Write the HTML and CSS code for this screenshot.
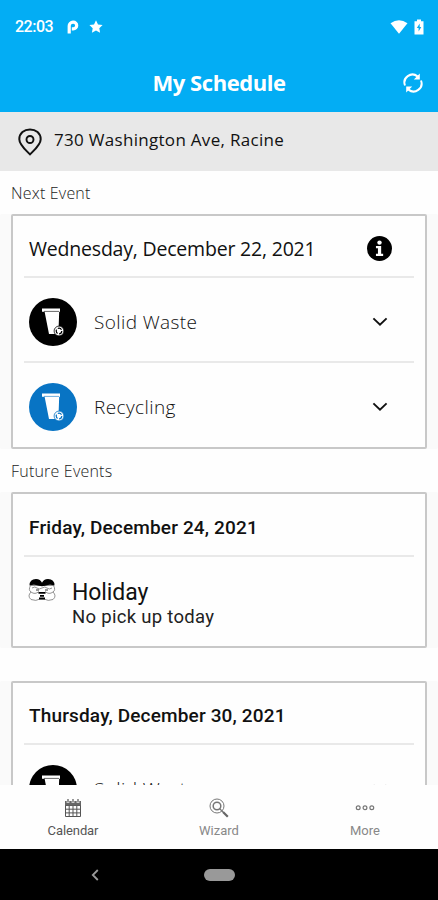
FILE: index.html
```
<!DOCTYPE html>
<html lang="en">
<head>
  <meta charset="UTF-8">
  <meta name="viewport" content="width=device-width, initial-scale=1.0">
  <title>My Schedule</title>
  <link rel="stylesheet" href="styles.css">
</head>
<body>
  <svg class="sprite">
    <symbol id="bin" viewBox="0 0 48 48">
      <path d="M13 10.500h18v3.200h-.8L29.400 36H20L15.600 13.700H13z" fill="#fff"/>
      <path d="M15 13.400h15" stroke="currentColor" stroke-width=".6"/>
      <circle cx="30" cy="33" r="4.900" fill="#fff" stroke="currentColor" stroke-width=".8"/>
      <circle cx="30" cy="33" r="2.800" fill="none" stroke="currentColor" stroke-width="1.200" stroke-dasharray="4.200 1.600"/>
    </symbol>
    <symbol id="chevron" viewBox="0 0 16 10">
      <path d="M1.400 1.400L8 7.800l6.600-6.400" fill="none" stroke="#111" stroke-width="1.900"/>
    </symbol>
  </svg>
  <div class="screen">
    <header class="header">
      <div class="status">
        <span class="time">22:03</span>
        <svg class="parking" viewBox="0 0 12 14">
          <path d="M2.200 13.500V6a3.800 3.800 0 0 1 3.800-3.900h.3a3.400 3.400 0 0 1 0 6.800H4.800" fill="none" stroke="#fff" stroke-width="3.200"/>
        </svg>
        <svg class="star" viewBox="0 0 14 13">
          <path d="M7 .3l2 4.200 4.600.6-3.300 3.100.8 4.600L7 10.600l-4.100 2.200.8-4.600L.4 5.100 5 4.500z" fill="#fff"/>
        </svg>
        <svg class="wifi" viewBox="0 0 18 14">
          <path d="M.5 3.200Q9-2.600 17.500 3.200L9 13.800z" fill="#fff"/>
        </svg>
        <svg class="battery" viewBox="0 0 10 16">
          <path d="M3 .5h4v1.700h2.500v13.300h-9V2.200H3z" fill="#fff"/>
          <path d="M5.700 4.500L2.800 9h1.800v3.500L7.300 8H5.700z" fill="#03adf4"/>
        </svg>
      </div>
      <div class="title-bar">
        <h1>My Schedule</h1>
        <svg class="refresh" viewBox="0 0 20 20">
          <path d="M2 12.500A8 8 0 0 1 14.500 3.400M18 7.500A8 8 0 0 1 5.500 16.600" fill="none" stroke="#fff" stroke-width="2"/>
          <path d="M16.800.6v6h-6zM3.200 19.400v-6h6z" fill="#fff"/>
        </svg>
      </div>
    </header>

    <div class="address">
      <svg class="pin" viewBox="0 0 24 28">
        <path d="M12 26.400C7.500 21.700 1.300 16.800 1.300 11.200 1.300 5.300 6.100 1.400 12 1.400s10.700 3.900 10.700 9.800c0 5.600-6.200 10.500-10.700 15.200z" fill="none" stroke="#111" stroke-width="2"/>
        <circle cx="12" cy="11.500" r="3.500" fill="none" stroke="#111" stroke-width="1.900"/>
      </svg>
      <span>730 Washington Ave, Racine</span>
    </div>

    <main class="content">
      <h2 class="label">Next Event</h2>
      <section class="card next">
        <div class="date">
          <span>Wednesday, December 22, 2021</span>
          <svg class="info" viewBox="0 0 24 24">
            <circle cx="12" cy="12" r="12" fill="#000"/>
            <circle cx="12" cy="6.300" r="2.100" fill="#fff"/>
            <path d="M8.600 9.500h5v7.500h1.900v2.200H8.600V17h1.900v-5.300H8.600z" fill="#fff"/>
          </svg>
        </div>
        <div class="row">
          <svg class="badge"><use href="#bin"/></svg>
          <span>Solid Waste</span>
          <svg class="chevron"><use href="#chevron"/></svg>
        </div>
        <div class="row">
          <svg class="badge blue"><use href="#bin"/></svg>
          <span>Recycling</span>
          <svg class="chevron"><use href="#chevron"/></svg>
        </div>
      </section>

      <h2 class="label">Future Events</h2>
      <section class="card future">
        <div class="date"><span>Friday, December 24, 2021</span></div>
        <div class="holiday">
          <svg class="faces" viewBox="0 0 28 24">
            <g fill="#fff" stroke="#777" stroke-width=".8">
              <path d="M2.500 7.500Q0 12 3 14-1 18 3 21.500q5 2 9-.5h4q4 2.500 9 .5 4-3.500 0-7.500 3-2 .5-6.500z"/>
              <path d="M4 10q3-2 5 0t5 0 5 0 5 0M3 14q4 3 8-.5M25 14q-4 3-8-.5" fill="none"/>
            </g>
            <path d="M1.500 7.500Q1.500 1 8 1q4.500.2 6 3.700Q15.500 1.200 20 1q6.500 0 6.500 6.500-3.500-1-6.500-.5-3 .8-6 1.300-3-.5-6-1.300-3-.5-6.500.5z" fill="#000"/>
            <path d="M8 12h3M17 12h3" stroke="#333" stroke-width="1"/>
            <path d="M10.500 14.800h7M12 17.800h4M11 20.500h6" stroke="#000" stroke-width="1.800"/>
          </svg>
          <div class="detail">
            <p class="name">Holiday</p>
            <p class="note">No pick up today</p>
          </div>
        </div>
      </section>

      <section class="card future later">
        <div class="date"><span>Thursday, December 30, 2021</span></div>
        <div class="row">
          <svg class="badge"><use href="#bin"/></svg>
          <span>Solid Waste</span>
          <svg class="chevron"><use href="#chevron"/></svg>
        </div>
      </section>
    </main>

    <nav class="tabs">
      <a class="tab active">
        <svg viewBox="0 0 20 20">
          <path d="M2.500 3.500h15v15h-15zM2.500 7.500h15M2.500 11.200h15M2.500 14.900h15M6.200 7v11.500M10 7v11.500M13.800 7v11.500" fill="none" stroke="#555" stroke-width="1"/>
          <path d="M2 3h16v4.500H2z" fill="#666"/>
          <path d="M5 1v4M10 1v4M15 1v4" stroke="#fff" stroke-width="2.600"/>
          <path d="M5 1v3.500M10 1v3.500M15 1v3.500" stroke="#555" stroke-width="1.200"/>
        </svg>
        <span>Calendar</span>
      </a>
      <a class="tab">
        <svg viewBox="0 0 20 20">
          <circle cx="8" cy="8" r="7" fill="none" stroke="#777" stroke-width="1"/>
          <circle cx="8" cy="8" r="3.800" fill="none" stroke="#777" stroke-width="1.500"/>
          <path d="M10.500 10.500l3.500 3.500" stroke="#777" stroke-width="1.200"/>
          <path d="M14 14l4.800 4.800" stroke="#666" stroke-width="2.200"/>
        </svg>
        <span>Wizard</span>
      </a>
      <a class="tab">
        <svg viewBox="0 0 20 20">
          <g fill="none" stroke="#777" stroke-width="1.200">
            <circle cx="3.200" cy="9.700" r="1.900"/>
            <circle cx="10" cy="9.700" r="1.900"/>
            <circle cx="16.800" cy="9.700" r="1.900"/>
          </g>
        </svg>
        <span>More</span>
      </a>
    </nav>

    <div class="system-nav">
      <svg class="back" viewBox="0 0 8 12">
        <path d="M6.800 1L1.800 6l5 5" fill="none" stroke="#999" stroke-width="1.800"/>
      </svg>
      <span class="home"></span>
    </div>
  </div>
</body>
</html>
```
FILE: styles.css
```
* {
  margin: 0;
  padding: 0;
  box-sizing: border-box;
}
body {
  background: #fefefe;
  font-family: "Open Sans", "Noto Sans", sans-serif;
  color: #111;
}
svg {
  display: block;
  flex: none;
}
span,
h1,
h2,
p {
  white-space: nowrap;
}
.sprite {
  display: none;
}
.screen {
  display: flex;
  flex-direction: column;
  width: 438px;
  height: 900px;
  overflow: hidden;
}
.header {
  flex: none;
  height: 112px;
  background: #03adf4;
  color: #fff;
}
.status {
  display: flex;
  align-items: center;
  height: 54px;
  padding: 0 14px 0 15px;
}
.time {
  width: 52px;
  font: 500 16px/20px Roboto, sans-serif;
  letter-spacing: -.5px;
}
.parking {
  width: 12px;
  height: 14px;
}
.star {
  width: 14px;
  height: 13px;
  margin-left: 10px;
  margin-bottom: 1px;
}
.wifi {
  width: 18px;
  height: 14px;
  margin-left: auto;
}
.battery {
  width: 10px;
  height: 16px;
  margin-left: 6px;
}
.title-bar {
  display: grid;
  grid-template-columns: 1fr auto 1fr;
  align-items: center;
  height: 57px;
  padding: 0 15px;
}
.title-bar h1 {
  grid-column: 2;
  padding-bottom: 2px;
  font-size: 22px;
  font-weight: 700;
  line-height: 30px;
  letter-spacing: -.45px;
}
.refresh {
  width: 20px;
  height: 20px;
  justify-self: end;
}
.address {
  display: flex;
  flex: none;
  align-items: center;
  height: 59px;
  padding-left: 18px;
  background: #e8e8e8;
  font-size: 17px;
  letter-spacing: .3px;
}
.address span {
  padding-bottom: 5px;
}
.pin {
  width: 24px;
  height: 28px;
  margin-right: 12px;
}
.content {
  flex: 1;
  min-height: 0;
  overflow: hidden;
}
.label {
  height: 43px;
  padding-left: 11px;
  font-size: 16px;
  font-weight: 300;
  line-height: 45px;
  letter-spacing: .2px;
  color: #222;
}
.card {
  margin: 0 11px;
  padding: 0 11px;
  border: 2px solid #c8c8c8;
  border-radius: 2px;
  background: #fefefe;
  /* tinted gutters on both sides */
  box-shadow: -11px 0 #fafafa, 11px 0 #fafafa;
}
.next {
  height: 235px;
}
.future {
  height: 156px;
}
.date {
  display: flex;
  align-items: center;
  justify-content: space-between;
  height: 62px;
  padding: 4px 22px 0 5px;
  border-bottom: 2px solid #e9e9e9;
  font-size: 19.5px;
  letter-spacing: -.2px;
}
.future .date {
  height: 63px;
  padding-top: 7px;
  font: 500 19px/24px Roboto, sans-serif;
  letter-spacing: .16px;
}
.later {
  height: 240px;
  margin-top: 33px;
}
.later .date {
  height: 62px;
  padding-top: 6px;
}
.info {
  width: 25px;
  height: 25px;
}
.row {
  display: flex;
  align-items: center;
  height: 83px;
  padding: 4px 26px 0 5px;
  font-size: 19px;
  font-weight: 300;
  letter-spacing: .4px;
}
.row + .row {
  height: 85px;
  border-top: 2px solid #e9e9e9;
}
.badge {
  width: 48px;
  height: 48px;
  margin-right: 17px;
  border-radius: 50%;
  background: #000;
  color: #000;
}
.blue {
  background: #0874c4;
  color: #0874c4;
}
.chevron {
  width: 16px;
  height: 10px;
  margin-left: auto;
}
.holiday {
  display: flex;
  padding: 21px 0 0 4px;
  font-family: Roboto, sans-serif;
}
.faces {
  width: 28px;
  height: 24px;
  margin-right: 16px;
}
.detail {
  padding-top: 2px;
}
.name {
  font-size: 23px;
  line-height: 26px;
  letter-spacing: -.1px;
}
.note {
  font-size: 18.5px;
  line-height: 22px;
  letter-spacing: .3px;
  color: #222;
}
.tabs {
  display: flex;
  flex: none;
  height: 64px;
  background: #fefefe;
}
.tab {
  display: flex;
  flex: 1;
  flex-direction: column;
  align-items: center;
  padding-top: 13px;
  font: 400 13px/18px Roboto, sans-serif;
  color: #888;
}
.tab svg {
  width: 20px;
  height: 20px;
  margin-bottom: 4px;
}
.active {
  letter-spacing: -.1px;
  color: #555;
}
.system-nav {
  display: grid;
  grid-template-columns: 1fr auto 1fr;
  align-items: center;
  flex: none;
  height: 51px;
  background: #000;
}
.back {
  width: 8px;
  height: 12px;
  margin-left: 91px;
}
.home {
  width: 31px;
  height: 12px;
  border-radius: 6px;
  background: #999;
}
```
